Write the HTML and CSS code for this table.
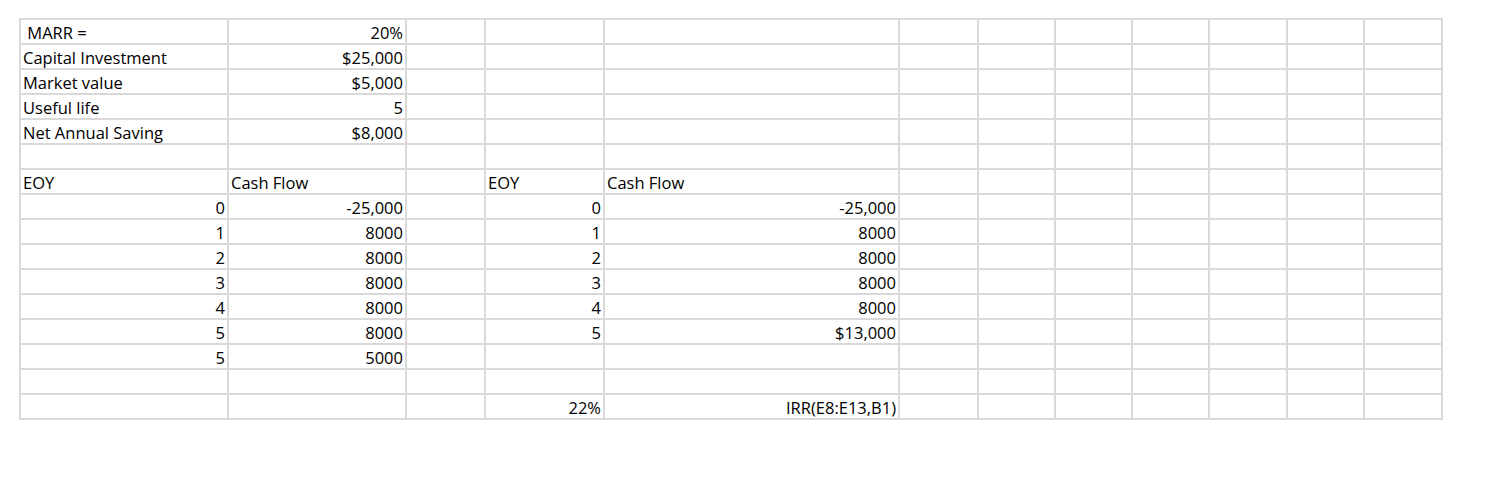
FILE: index.html
```html
<!DOCTYPE html>
<html>
<head>
<meta charset="utf-8">
<link rel="stylesheet" href="styles.css">
</head>
<body>
<div class="sheet">
  <div class="c">&nbsp;MARR =</div><div class="c r">20%</div><div class="c"></div><div class="c"></div><div class="c"></div><div class="c"></div><div class="c"></div><div class="c"></div><div class="c"></div><div class="c"></div><div class="c"></div><div class="c"></div>
  <div class="c">Capital Investment</div><div class="c r">$25,000</div><div class="c"></div><div class="c"></div><div class="c"></div><div class="c"></div><div class="c"></div><div class="c"></div><div class="c"></div><div class="c"></div><div class="c"></div><div class="c"></div>
  <div class="c">Market value</div><div class="c r">$5,000</div><div class="c"></div><div class="c"></div><div class="c"></div><div class="c"></div><div class="c"></div><div class="c"></div><div class="c"></div><div class="c"></div><div class="c"></div><div class="c"></div>
  <div class="c">Useful life</div><div class="c r">5</div><div class="c"></div><div class="c"></div><div class="c"></div><div class="c"></div><div class="c"></div><div class="c"></div><div class="c"></div><div class="c"></div><div class="c"></div><div class="c"></div>
  <div class="c">Net Annual Saving</div><div class="c r">$8,000</div><div class="c"></div><div class="c"></div><div class="c"></div><div class="c"></div><div class="c"></div><div class="c"></div><div class="c"></div><div class="c"></div><div class="c"></div><div class="c"></div>
  <div class="c"></div><div class="c"></div><div class="c"></div><div class="c"></div><div class="c"></div><div class="c"></div><div class="c"></div><div class="c"></div><div class="c"></div><div class="c"></div><div class="c"></div><div class="c"></div>
  <div class="c">EOY</div><div class="c">Cash Flow</div><div class="c"></div><div class="c">EOY</div><div class="c">Cash Flow</div><div class="c"></div><div class="c"></div><div class="c"></div><div class="c"></div><div class="c"></div><div class="c"></div><div class="c"></div>
  <div class="c r">0</div><div class="c r">-25,000</div><div class="c"></div><div class="c r">0</div><div class="c r">-25,000</div><div class="c"></div><div class="c"></div><div class="c"></div><div class="c"></div><div class="c"></div><div class="c"></div><div class="c"></div>
  <div class="c r">1</div><div class="c r">8000</div><div class="c"></div><div class="c r">1</div><div class="c r">8000</div><div class="c"></div><div class="c"></div><div class="c"></div><div class="c"></div><div class="c"></div><div class="c"></div><div class="c"></div>
  <div class="c r">2</div><div class="c r">8000</div><div class="c"></div><div class="c r">2</div><div class="c r">8000</div><div class="c"></div><div class="c"></div><div class="c"></div><div class="c"></div><div class="c"></div><div class="c"></div><div class="c"></div>
  <div class="c r">3</div><div class="c r">8000</div><div class="c"></div><div class="c r">3</div><div class="c r">8000</div><div class="c"></div><div class="c"></div><div class="c"></div><div class="c"></div><div class="c"></div><div class="c"></div><div class="c"></div>
  <div class="c r">4</div><div class="c r">8000</div><div class="c"></div><div class="c r">4</div><div class="c r">8000</div><div class="c"></div><div class="c"></div><div class="c"></div><div class="c"></div><div class="c"></div><div class="c"></div><div class="c"></div>
  <div class="c r">5</div><div class="c r">8000</div><div class="c"></div><div class="c r">5</div><div class="c r">$13,000</div><div class="c"></div><div class="c"></div><div class="c"></div><div class="c"></div><div class="c"></div><div class="c"></div><div class="c"></div>
  <div class="c r">5</div><div class="c r">5000</div><div class="c"></div><div class="c"></div><div class="c"></div><div class="c"></div><div class="c"></div><div class="c"></div><div class="c"></div><div class="c"></div><div class="c"></div><div class="c"></div>
  <div class="c"></div><div class="c"></div><div class="c"></div><div class="c"></div><div class="c"></div><div class="c"></div><div class="c"></div><div class="c"></div><div class="c"></div><div class="c"></div><div class="c"></div><div class="c"></div>
  <div class="c"></div><div class="c"></div><div class="c"></div><div class="c r">22%</div><div class="c r">IRR(E8:E13,B1)</div><div class="c"></div><div class="c"></div><div class="c"></div><div class="c"></div><div class="c"></div><div class="c"></div><div class="c"></div>
</div>
</body>
</html>
```

FILE: styles.css
```css
html, body {
  margin: 0;
  padding: 0;
  background: #ffffff;
}

.sheet {
  display: grid;
  grid-template-columns: 206px 176px 77px 117px 293px 77px 75px 75px 75px 76px 75px 76px;
  grid-auto-rows: 23px;
  gap: 2px;
  padding: 2px;
  background: #d9d9d9;
  width: max-content;
  margin: 18px 0 0 19px;
  font-family: "Open Sans", Lato, sans-serif;
  font-size: 16.5px;
  color: #000;
}

.c {
  background: #ffffff;
  display: flex;
  align-items: flex-end;
  padding: 0 2px 1px 2px;
  white-space: pre;
  overflow: hidden;
  line-height: 19px;
}

.r {
  justify-content: flex-end;
}
```
